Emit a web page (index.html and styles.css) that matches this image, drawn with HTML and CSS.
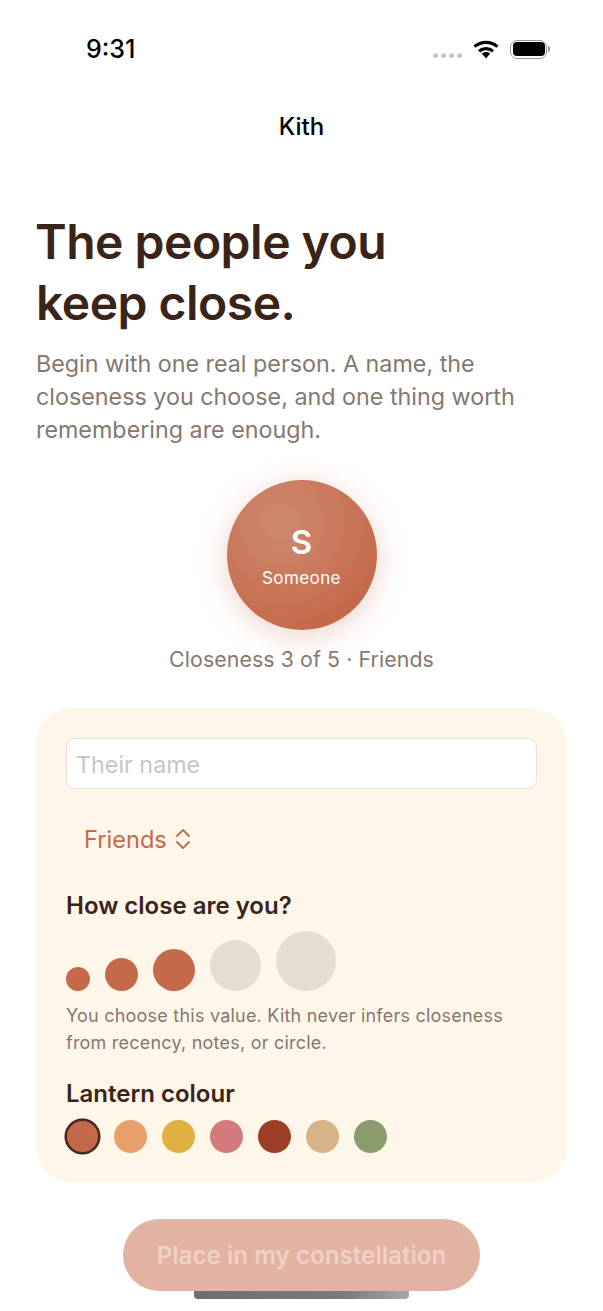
FILE: index.html
```html
<!DOCTYPE html>
<html lang="en">
<head>
  <meta charset="UTF-8">
  <title>Kith</title>
  <link rel="stylesheet" href="styles.css">
</head>
<body>

  <!-- Status bar -->
  <div class="status-bar">
    <span class="clock">9:31</span>
    <div class="status-icons">
      <div class="signal">
        <i></i><i></i><i></i><i></i>
      </div>
      <svg class="wifi" width="26" height="19" viewBox="0 0 26 19">
        <path d="M1.5 6.6C7.9 .9 18.100 .9 24.500 6.600" fill="none" stroke="#000" stroke-width="3.200"/>
        <path d="M6 11.200C9.900 7.700 16.100 7.700 20 11.200" fill="none" stroke="#000" stroke-width="3.200"/>
        <path d="M8.800 13.500C11.300 11.500 14.700 11.500 17.200 13.500L13 18.500Z" fill="#000"/>
      </svg>
      <div class="battery"><div class="battery-fill"></div></div>
      <div class="battery-cap"></div>
    </div>
  </div>

  <div class="nav-title">Kith</div>

  <section class="intro">
    <h1>The people you<br>keep close.</h1>
    <p>Begin with one real person. A name, the closeness you choose, and one thing worth remembering are enough.</p>
  </section>

  <section class="lantern-preview">
    <div class="lantern">
      <span class="lantern-initial">S</span>
      <span class="lantern-name">Someone</span>
    </div>
    <div class="lantern-caption">Closeness 3 of 5 · Friends</div>
  </section>

  <!-- Form card -->
  <section class="card">
    <div class="name-input">Their name</div>

    <div class="circle-picker">
      <span>Friends</span>
      <svg width="16" height="22" viewBox="0 0 16 22">
        <path d="M2 8L8 2L14 8M2 14L8 20L14 14" fill="none" stroke="#c4694a" stroke-width="1.800" stroke-linecap="round" stroke-linejoin="round"/>
      </svg>
    </div>

    <h3 class="field-title">How close are you?</h3>
    <div class="closeness">
      <div class="dot on d1"></div>
      <div class="dot on d2"></div>
      <div class="dot on d3"></div>
      <div class="dot d4"></div>
      <div class="dot d5"></div>
    </div>
    <p class="help">You choose this value. Kith never infers closeness from recency, notes, or circle.</p>

    <h3 class="field-title colour-title">Lantern colour</h3>
    <div class="swatches">
      <div class="swatch selected c1"></div>
      <div class="swatch c2"></div>
      <div class="swatch c3"></div>
      <div class="swatch c4"></div>
      <div class="swatch c5"></div>
      <div class="swatch c6"></div>
      <div class="swatch c7"></div>
    </div>
  </section>

  <div class="footer">
    <button class="place-btn">Place in my constellation</button>
  </div>

  <div class="home-indicator"></div>
</body>
</html>
```

FILE: styles.css
```css
/* ================================
   Page
   ================================ */
html, body {
  margin: 0;
  padding: 0;
}

body {
  position: relative;
  width: 603px;
  height: 1311px;
  overflow: hidden;
  background-color: #fff;
  font-family: "Inter", "Noto Sans", sans-serif;
  color: #3a2418;
}

/* ================================
   Status bar & title
   ================================ */
.status-bar {
  display: flex;
  justify-content: space-between;
  align-items: center;
  height: 32px;
  padding: 33px 53px 0 86px;
}

.clock {
  font-size: 25px;
  font-weight: 500;
  color: #000;
}

.status-icons {
  display: flex;
  align-items: center;
}

.signal {
  display: flex;
  gap: 3px;
  margin: 12px 11px 0 0;
}

.signal i {
  width: 5px;
  height: 5px;
  border-radius: 50%;
  background-color: #c9c9c9;
}

.wifi {
  margin-right: 11px;
}

.battery {
  box-sizing: border-box;
  width: 37px;
  height: 19px;
  padding: 1.500px;
  border: 1.500px solid #999;
  border-radius: 7px;
}

.battery-fill {
  height: 100%;
  border-radius: 4px;
  background-color: #000;
}

.battery-cap {
  width: 2px;
  height: 6px;
  margin-left: 1px;
  border-radius: 0 2px 2px 0;
  background-color: #999;
}

.nav-title {
  margin-top: 32px;
  text-align: center;
  font-size: 24px;
  line-height: 60px;
  font-weight: 500;
  color: #000;
}

/* ================================
   Intro text
   ================================ */
.intro {
  padding: 54px 36px 0;
}

.intro h1 {
  margin: 0;
  font-size: 48px;
  line-height: 61px;
  font-weight: 600;
  letter-spacing: -0.5px;
  text-indent: -1px;
}

.intro p {
  margin: 14px 0 0;
  font-size: 23.300px;
  line-height: 33px;
  color: #85786f;
}

/* ================================
   Lantern preview
   ================================ */
.lantern-preview {
  display: flex;
  flex-direction: column;
  align-items: center;
  margin-top: 34px;
}

.lantern {
  display: flex;
  flex-direction: column;
  align-items: center;
  justify-content: center;
  width: 150px;
  height: 150px;
  border-radius: 50%;
  color: #fff;
  background: radial-gradient(circle at 36% 28%, #cd8a70 0%, #c9775a 45%, #c4694a 75%);
  box-shadow: 0 6px 30px rgba(196, 105, 74, 0.3);
}

.lantern-initial {
  font-size: 33px;
  line-height: 40px;
  font-weight: 600;
}

.lantern-name {
  margin-top: 6px;
  font-size: 17px;
  line-height: 20px;
  font-weight: 400;
  letter-spacing: 0.4px;
}

.lantern-caption {
  margin-top: 15px;
  font-size: 21.300px;
  line-height: 28px;
  font-weight: 400;
  letter-spacing: 0.1px;
  color: #85786f;
}

/* ================================
   Card
   ================================ */
.card {
  box-sizing: border-box;
  height: 474px;
  margin: 35px 36px 0;
  padding: 30px;
  border-radius: 36px;
  background-color: #fff6ea;
}

.name-input {
  box-sizing: border-box;
  height: 51px;
  padding-left: 9px;
  border: 1px solid #e8e2dc;
  border-radius: 9px;
  background-color: #fff;
  font-size: 23.300px;
  line-height: 51px;
  color: #c8c6c4;
}

.circle-picker {
  display: flex;
  align-items: center;
  gap: 8px;
  height: 40px;
  margin-top: 30px;
  padding-left: 18px;
  font-size: 23.600px;
  color: #c4694a;
}

.field-title {
  margin: 0;
  font-size: 24px;
  line-height: 30px;
  font-weight: 600;
}

.circle-picker + .field-title {
  margin-top: 32px;
}

.closeness {
  display: flex;
  align-items: flex-end;
  gap: 15px;
  height: 60px;
  margin-top: 10px;
}

.dot {
  border-radius: 50%;
  background-color: #e6dcd0;
}

.dot.on { background-color: #c4694a; }
.d1 { width: 24px; height: 24px; }
.d2 { width: 33px; height: 33px; }
.d3 { width: 42px; height: 42px; }
.d4 { width: 51px; height: 51px; }
.d5 { width: 60px; height: 60px; }

.help {
  margin: 11px 0 0;
  font-size: 18px;
  line-height: 27px;
  letter-spacing: 0.22px;
  color: #85786f;
}

.colour-title {
  margin-top: 23px;
}

.swatches {
  display: flex;
  gap: 15px;
  margin-top: 11px;
}

.swatch {
  width: 33px;
  height: 33px;
  border-radius: 50%;
}

.swatch.selected {
  box-shadow: inset 0 0 0 1px #3a2418, 0 0 0 1.500px #3a2418;
}

.c1 { background-color: #c4694a; }
.c2 { background-color: #e8a06a; }
.c3 { background-color: #e0b040; }
.c4 { background-color: #d47a7a; }
.c5 { background-color: #9c3d28; }
.c6 { background-color: #d6b488; }
.c7 { background-color: #8b9c6c; }

/* ================================
   Bottom button
   ================================ */
.footer {
  display: flex;
  justify-content: center;
  margin-top: 37px;
}

.place-btn {
  width: 357px;
  height: 72px;
  border: 0;
  border-radius: 36px;
  background-color: #e2b3a3;
  font-family: inherit;
  font-size: 24.200px;
  font-weight: 600;
  color: #f0d0c4;
}

.home-indicator {
  position: absolute;
  left: 194px;
  top: 1291px;
  width: 215px;
  height: 8px;
  border-radius: 0 0 4px 4px;
  background: linear-gradient(90deg, #6e6e6e, #7a7a7a 70%, #a8a8a8);
}
```
